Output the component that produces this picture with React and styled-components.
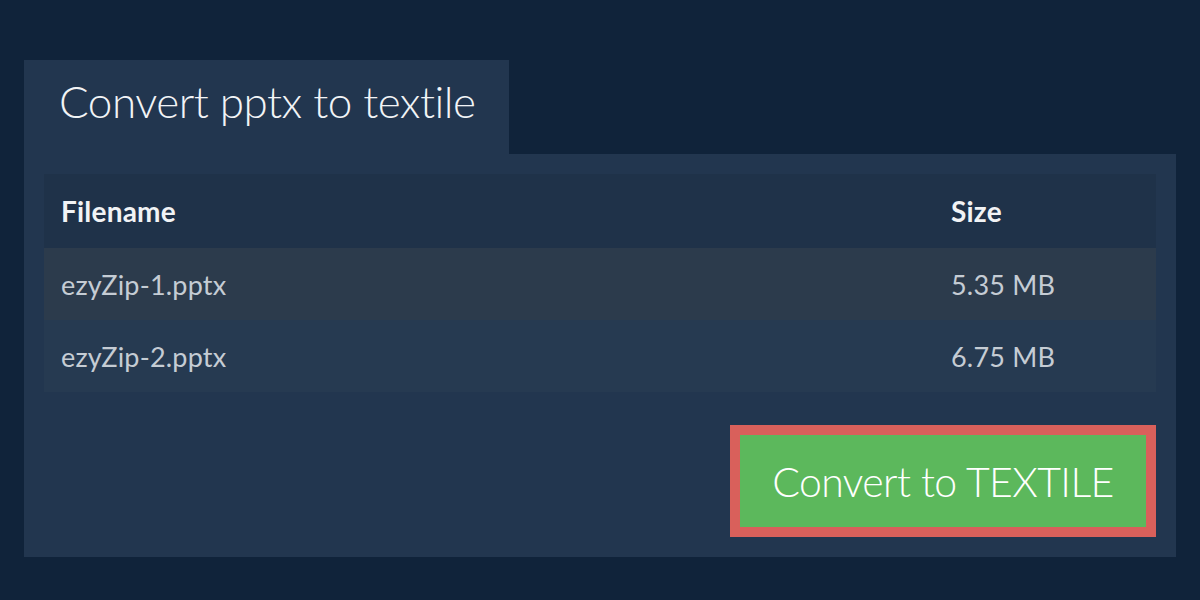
import React from 'react';
import styled, { createGlobalStyle } from 'styled-components';

const GlobalStyle = createGlobalStyle`
  body {
    margin: 0;
    background: #10233a;
    font-family: Lato, "Open Sans", sans-serif;
  }
`;

const Page = styled.div`
  padding: 60px 24px 0 24px;
`;

const Tab = styled.div`
  display: inline-block;
  background: #22364f;
  color: #f2f4f6;
  font-size: 44px;
  font-weight: 300;
  letter-spacing: -0.5px;
  height: 94px;
  line-height: 82px;
  padding: 0 33px 0 35px;
  box-sizing: border-box;
  white-space: nowrap;
`;

const Panel = styled.div`
  background: #22364f;
  padding: 20px;
  display: flex;
  flex-direction: column;
`;

const Table = styled.div`
  display: flex;
  flex-direction: column;
`;

const Row = styled.div`
  display: grid;
  grid-template-columns: 1fr 205px;
  align-items: center;
  height: ${p => p.$height || 72}px;
  padding-left: 17px;
  background: ${p => p.$bg};
  color: ${p => (p.$head ? '#f1f3f5' : '#c5ccd4')};
  font-size: ${p => (p.$head ? 28 : 27)}px;
  font-weight: ${p => (p.$head ? 700 : 400)};
  letter-spacing: ${p => (p.$head ? 0.2 : 0.2)}px;
`;

const Footer = styled.div`
  display: flex;
  justify-content: flex-end;
  margin-top: 33px;
`;

const ConvertButton = styled.button`
  background: #5cb85c;
  border: 10px solid #d9605b;
  color: #ffffff;
  font-family: Lato, "Open Sans", sans-serif;
  font-size: 41px;
  font-weight: 300;
  letter-spacing: -0.6px;
  width: 426px;
  height: 112px;
  padding: 0;
  cursor: pointer;
`;

const files = [
  { name: 'ezyZip-1.pptx', size: '5.35 MB', bg: '#2c3b4c' },
  { name: 'ezyZip-2.pptx', size: '6.75 MB', bg: '#263a51' },
];

export default function App() {
  return (
    <Page>
      <GlobalStyle />
      <Tab>Convert pptx to textile</Tab>
      <Panel>
        <Table>
          <Row $head $bg="#1f3249" $height={74}>
            <span>Filename</span>
            <span>Size</span>
          </Row>
          {files.map(f => (
            <Row key={f.name} $bg={f.bg}>
              <span>{f.name}</span>
              <span>{f.size}</span>
            </Row>
          ))}
        </Table>
        <Footer>
          <ConvertButton>Convert to TEXTILE</ConvertButton>
        </Footer>
      </Panel>
    </Page>
  );
}
